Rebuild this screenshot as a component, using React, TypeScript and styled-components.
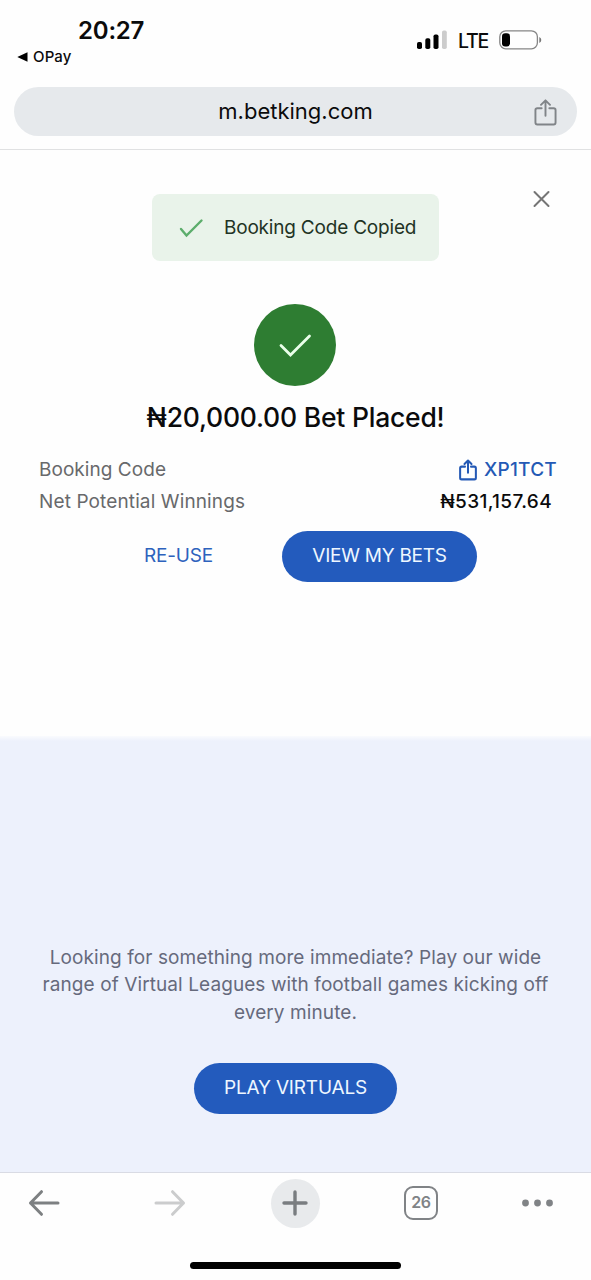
import React from 'react';
import styled, { createGlobalStyle } from 'styled-components';

const GlobalStyle = createGlobalStyle`
  * { box-sizing: border-box; }
  body {
    margin: 0;
    background: #fefefe;
    font-family: Inter, "Liberation Sans", sans-serif;
    color: #0b0b0c;
  }
  button { font: inherit; border: 0; background: none; padding: 0; margin: 0; color: inherit; }
  svg { display: block; flex: none; }
`;

const Screen = styled.main`
  width: 591px;
  height: 1280px;
  display: flex;
  flex-direction: column;
  overflow: hidden;
`;

const Label = styled.span<{ $size: number; $track?: number; $weight?: number; $color?: string }>`
  font-size: ${(p) => p.$size}px;
  letter-spacing: ${(p) => p.$track ?? 0}px;
  font-weight: ${(p) => p.$weight ?? 400};
  color: ${(p) => p.$color ?? 'inherit'};
  line-height: 1.2;
  white-space: nowrap;
`;

const StatusBar = styled.header`
  height: 87px;
  display: flex;
  justify-content: space-between;
  padding: 15px 49px 0 17px;
`;

const StatusLeft = styled.div`
  display: flex;
  flex-direction: column;
`;

const Clock = styled.div`
  padding: 2px 0 0 61px;
  height: 33px;
`;

const BackToApp = styled.div`
  display: flex;
  align-items: center;
  gap: 5px;
  height: 18px;
`;

const StatusRight = styled.div`
  display: flex;
  align-items: center;
  height: 50px;
`;

const Carrier = styled.div`
  width: 42px;
  margin-left: 10px;
  padding: 4px 0 0 1px;
`;

const AddressWrap = styled.div`
  height: 63px;
  padding: 0 14px;
  border-bottom: 1px solid #e0e1e2;
`;

const AddressBar = styled.div`
  height: 49px;
  border-radius: 25px;
  background: #e6e9ec;
  display: grid;
  grid-template-columns: 44px 1fr 44px;
  align-items: center;
  justify-items: center;
  padding: 0 10px;
`;

const ShareButton = styled.button`
  margin-top: 2px;
  color: #808488;
`;

const Receipt = styled.section`
  height: 586px;
  display: flex;
  flex-direction: column;
  padding-top: 44px;
`;

const TopRow = styled.div`
  display: grid;
  grid-template-columns: 152px 287px 1fr;
  align-items: start;
`;

const Toast = styled.div`
  grid-column: 2;
  height: 67px;
  border-radius: 8px;
  background: #e9f3ea;
  display: flex;
  align-items: center;
  padding: 1px 0 0 26px;
  gap: 19px;
`;

const CloseButton = styled.button`
  justify-self: end;
  margin: -4px 41px 0 0;
`;

const SuccessBadge = styled.div`
  width: 82px;
  height: 82px;
  margin: 43px 0 0 254px;
  border-radius: 50%;
  background: #2e7d32;
  display: grid;
  place-items: center;
`;

const Title = styled.h1`
  margin: 15px 0 0;
  height: 32px;
  line-height: 32px;
  text-align: center;
  font-size: 26.5px;
  font-weight: 500;
  letter-spacing: -0.22px;
  white-space: nowrap;
`;

const Details = styled.div`
  margin-top: 21px;
  padding: 0 34px 0 39px;
`;

const DetailRow = styled.div<{ $inset?: number }>`
  height: 32px;
  display: flex;
  align-items: center;
  justify-content: space-between;
  padding-right: ${(p) => p.$inset ?? 0}px;
`;

const CodeLink = styled.div`
  display: flex;
  align-items: center;
  gap: 7px;
  color: #2459b5;
`;

const Actions = styled.div`
  display: flex;
  align-items: center;
  justify-content: space-between;
  margin-top: 12.5px;
  padding: 0 114px 0 144px;
`;

const PillButton = styled.button<{ $width: number }>`
  width: ${(p) => p.$width}px;
  height: 51px;
  border-radius: 26px;
  background: #235bbd;
  color: #eef7ff;
  display: flex;
  align-items: center;
  justify-content: center;
`;

const Promo = styled.section`
  height: 436px;
  background: linear-gradient(#fafbfe, #edf1fc 5px);
  display: flex;
  flex-direction: column;
  align-items: center;
  padding-top: 207.5px;
`;

const PromoText = styled.p`
  margin: 0 0 37px;
  font-size: 19px;
  line-height: 27.5px;
  letter-spacing: 0.09px;
  color: #666a7c;
  text-align: center;
  white-space: nowrap;
`;

const BrowserNav = styled.nav`
  height: 108px;
  border-top: 1px solid #d9dbe4;
  display: flex;
  flex-direction: column;
  align-items: center;
`;

const NavItems = styled.div`
  width: 100%;
  height: 60px;
  display: grid;
  grid-template-columns: 87px 165px 86px 166px 67px;
  align-items: center;
  justify-items: center;
`;

const NewTab = styled.button`
  width: 49px;
  height: 49px;
  border-radius: 50%;
  background: #e8eaec;
  display: grid;
  place-items: center;
`;

const TabCount = styled.button`
  width: 34px;
  height: 34px;
  border: 2.5px solid #808386;
  border-radius: 9px;
  display: grid;
  place-items: center;
`;

const HomeIndicator = styled.div`
  width: 211px;
  height: 7px;
  margin-top: 29px;
  border-radius: 4px;
  background: #000;
`;

const ShareIcon = ({ width, height, stroke }: { width: number; height: number; stroke: number }) => (
  <svg width={width} height={height} viewBox="0 0 24 28" fill="none" stroke="currentColor" strokeWidth={stroke} strokeLinecap="round" strokeLinejoin="round">
    <path d="M8 9.5H3.5Q1.5 9.5 1.5 11.5V24.5Q1.5 26.5 3.5 26.5H20.5Q22.5 26.5 22.5 24.5V11.5Q22.5 9.5 20.5 9.5H16" />
    <path d="M12 17.5V1.5M7.3 6L12 1.3L16.7 6" />
  </svg>
);

const SignalIcon = () => (
  <svg width="30" height="20" viewBox="0 0 30 20">
    <rect x="0" y="12" width="5" height="7" rx="1.8" fill="#000" />
    <rect x="8.3" y="8.3" width="5" height="10.7" rx="1.8" fill="#000" />
    <rect x="16.5" y="4.5" width="5" height="14.5" rx="1.8" fill="#000" />
    <rect x="25" y="0.5" width="4.8" height="18.5" rx="1.8" fill="#ccc" />
  </svg>
);

const BatteryIcon = () => (
  <svg width="43" height="20" viewBox="0 0 43 20">
    <rect x="0.8" y="0.8" width="37.6" height="18" rx="6" fill="none" stroke="#858585" strokeWidth="1.3" />
    <rect x="3" y="3.2" width="8" height="13.2" rx="3.2" fill="#000" />
    <path d="M40.3 7V13Q42.3 12.2 42.3 10T40.3 7Z" fill="#777" />
  </svg>
);

export default function App() {
  return (
    <>
      <GlobalStyle />
      <Screen>
        <StatusBar>
          <StatusLeft>
            <Clock>
              <Label $size={24} $weight={600} $track={-0.2}>20:27</Label>
            </Clock>
            <BackToApp>
              <svg width="11" height="10" viewBox="0 0 11 10"><path d="M0.3 5L10.5 0.3V9.7Z" fill="#000" /></svg>
              <Label $size={15} $weight={500} $track={0.15}>OPay</Label>
            </BackToApp>
          </StatusLeft>
          <StatusRight>
            <SignalIcon />
            <Carrier><Label $size={19.5} $weight={500} $track={-1.2}>LTE</Label></Carrier>
            <BatteryIcon />
          </StatusRight>
        </StatusBar>

        <AddressWrap>
          <AddressBar>
            <span />
            <Label $size={22}>m.betking.com</Label>
            <ShareButton aria-label="Share"><ShareIcon width={23} height={27} stroke={2} /></ShareButton>
          </AddressBar>
        </AddressWrap>

        <Receipt>
          <TopRow>
            <Toast>
              <svg width="27" height="22" viewBox="0 0 27 22" fill="none" stroke="#5cad6c" strokeWidth="2.4" strokeLinecap="round">
                <path d="M3 12L8.5 18.5L23.5 3.5" />
              </svg>
              <Label $size={19} $track={-0.2} $color="#1f3325">Booking Code Copied</Label>
            </Toast>
            <CloseButton aria-label="Close">
              <svg width="17" height="18" viewBox="0 0 17 18" stroke="#757575" strokeWidth="2" strokeLinecap="round">
                <path d="M1.5 2L15.5 16M15.5 2L1.5 16" />
              </svg>
            </CloseButton>
          </TopRow>

          <SuccessBadge>
            <svg width="34" height="26" viewBox="0 0 34 26" fill="none" stroke="#eaffea" strokeWidth="2.8" strokeLinecap="round">
              <path d="M3 13.5L12.5 23L31.5 4" />
            </svg>
          </SuccessBadge>
          <Title>₦20,000.00 Bet Placed!</Title>

          <Details>
            <DetailRow>
              <Label $size={19} $track={0.05} $color="#68696b">Booking Code</Label>
              <CodeLink>
                <ShareIcon width={18} height={24} stroke={2.7} />
                <Label $size={19} $weight={500} $track={0.25}>XP1TCT</Label>
              </CodeLink>
            </DetailRow>
            <DetailRow $inset={5}>
              <Label $size={19} $track={0.12} $color="#68696b">Net Potential Winnings</Label>
              <Label $size={19} $weight={500} $track={0.35}>₦531,157.64</Label>
            </DetailRow>
          </Details>

          <Actions>
            <Label as="button" $size={19} $track={-0.2} $color="#2d62bd">RE-USE</Label>
            <PillButton $width={195}><Label $size={19} $track={-0.25}>VIEW MY BETS</Label></PillButton>
          </Actions>
        </Receipt>

        <Promo>
          <PromoText>
            Looking for something more immediate? Play our wide<br />
            range of Virtual Leagues with football games kicking off<br />
            every minute.
          </PromoText>
          <PillButton $width={203}><Label $size={19} $track={-0.18}>PLAY VIRTUALS</Label></PillButton>
        </Promo>

        <BrowserNav>
          <NavItems>
            <svg width="32" height="28" viewBox="0 0 32 28" fill="none" stroke="#7d8082" strokeWidth="3" strokeLinecap="round" strokeLinejoin="round">
              <path d="M30 14H2.5M13.5 2.7L2.5 14L13.5 25.3" />
            </svg>
            <svg width="32" height="28" viewBox="0 0 32 28" fill="none" stroke="#cbcccd" strokeWidth="3" strokeLinecap="round" strokeLinejoin="round">
              <path d="M2 14H29.5M18.5 2.7L29.5 14L18.5 25.3" />
            </svg>
            <NewTab aria-label="New tab">
              <svg width="28" height="28" viewBox="0 0 28 28" stroke="#797d80" strokeWidth="3.4" strokeLinecap="round">
                <path d="M14 3V25M3 14H25" />
              </svg>
            </NewTab>
            <TabCount><Label $size={16} $weight={600} $track={-0.4} $color="#808386">26</Label></TabCount>
            <svg width="34" height="8" viewBox="0 0 34 8" fill="#808386">
              <circle cx="4.5" cy="4" r="3.4" />
              <circle cx="16.5" cy="4" r="3.4" />
              <circle cx="28.5" cy="4" r="3.4" />
            </svg>
          </NavItems>
          <HomeIndicator />
        </BrowserNav>
      </Screen>
    </>
  );
}
